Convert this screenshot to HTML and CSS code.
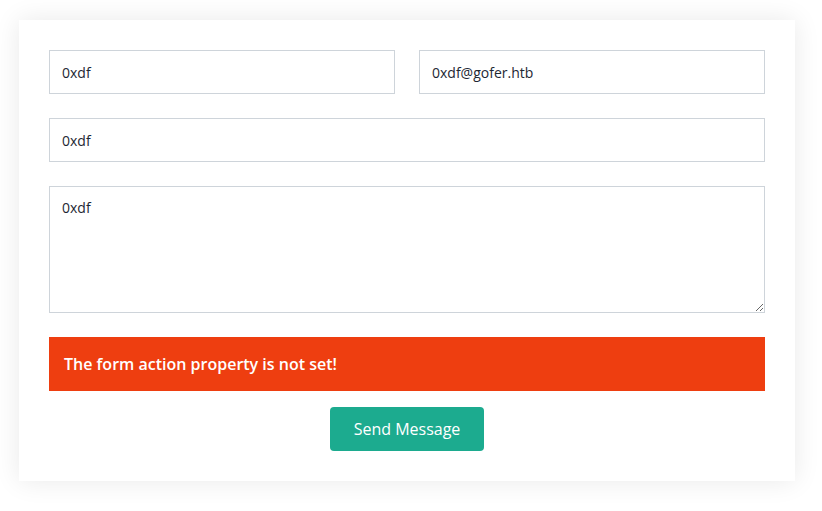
FILE: index.html
```html
<!DOCTYPE html>
<html>
<head>
<meta charset="utf-8">
<link rel="stylesheet" href="styles.css">
</head>
<body>
<div class="card">
  <form class="form">
    <div class="row">
      <input class="field" type="text" value="0xdf">
      <input class="field" type="text" value="0xdf@gofer.htb">
    </div>
    <input class="field" type="text" value="0xdf">
    <textarea class="field area">0xdf</textarea>
    <div class="alert">The form action property is not set!</div>
    <div class="actions"><button type="button" class="btn">Send Message</button></div>
  </form>
</div>
</body>
</html>
```
FILE: styles.css
```css
* { box-sizing: border-box; }
html, body { margin: 0; padding: 0; background: #fff; }
body {
  font-family: "Open Sans", sans-serif;
  padding: 20px 27px 30px 19px;
}
.card {
  background: #fff;
  box-shadow: 0 0 25px rgba(0,0,0,0.09);
  padding: 30px 30px 30px 30px;
}
.form {
  display: flex;
  flex-direction: column;
  gap: 24px;
}
.row {
  display: grid;
  grid-template-columns: 1fr 1fr;
  gap: 24px;
}
.field {
  display: block;
  width: 100%;
  height: 44px;
  border: 1px solid #ced4da;
  border-radius: 0;
  padding: 0 12px;
  font-family: "Open Sans", sans-serif;
  font-size: 14px;
  color: #1d2733;
  background: #fff;
  outline: none;
}
.area {
  height: 127px;
  padding: 11px 12px;
  resize: vertical;
  line-height: 20px;
}
.alert {
  background: #ee3e10;
  color: #fff;
  font-weight: 600;
  font-size: 16px;
  height: 54px;
  display: flex;
  align-items: center;
  padding: 0 15px;
}
.actions {
  display: flex;
  justify-content: center;
  margin-top: -8px;
}
.btn {
  background: #1cab8f;
  color: #fff;
  border: none;
  border-radius: 4px;
  height: 44px;
  width: 154px;
  font-family: "Open Sans", sans-serif;
  font-size: 16px;
  cursor: pointer;
}
```
